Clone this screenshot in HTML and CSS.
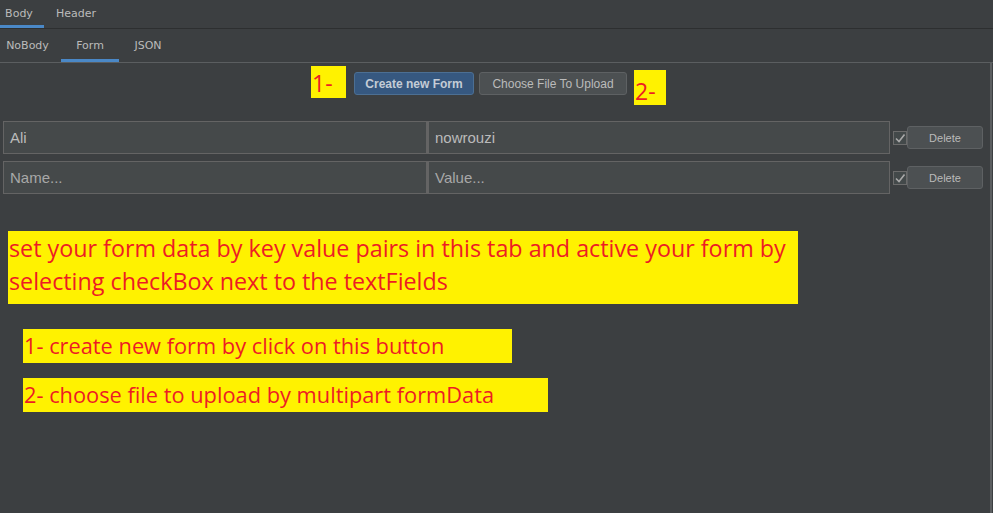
FILE: index.html
```html
<!DOCTYPE html>
<html>
<head>
<meta charset="utf-8">
<link rel="stylesheet" href="styles.css">
</head>
<body>
<div class="app">
  <div class="tabs tabs-main">
    <div class="tab active">Body</div>
    <div class="tab">Header</div>
  </div>
  <div class="tabs tabs-sub">
    <div class="tab">NoBody</div>
    <div class="tab active">Form</div>
    <div class="tab">JSON</div>
  </div>
  <div class="content">
    <div class="actions">
      <span class="note note-num note-1">1-</span>
      <button class="btn btn-primary">Create new Form</button>
      <button class="btn btn-upload">Choose File To Upload</button>
      <span class="note note-num note-2">2-</span>
    </div>
    <div class="rows">
      <div class="row">
        <div class="field field-key">Ali</div>
        <div class="field field-value">nowrouzi</div>
        <span class="check"><svg width="12" height="12" viewBox="0 0 12 12"><path d="M2 6.5 L5 9.5 L10.5 2.5" fill="none" stroke="#a9a9a9" stroke-width="1.6"/></svg></span>
        <button class="btn btn-small">Delete</button>
      </div>
      <div class="row">
        <div class="field field-key placeholder">Name...</div>
        <div class="field field-value placeholder">Value...</div>
        <span class="check"><svg width="12" height="12" viewBox="0 0 12 12"><path d="M2 6.5 L5 9.5 L10.5 2.5" fill="none" stroke="#a9a9a9" stroke-width="1.6"/></svg></span>
        <button class="btn btn-small">Delete</button>
      </div>
    </div>
    <div class="note note-main">set your form data by key value pairs in this tab and active your form by selecting checkBox next to the textFields</div>
    <div class="note note-line note-a">1- create new form by click on this button</div>
    <div class="note note-line note-b">2- choose file to upload by multipart formData</div>
  </div>
</div>
</body>
</html>
```
FILE: styles.css
```css
html, body {
  margin: 0;
  padding: 0;
  background: #3c3f41;
  height: 100%;
}
.app {
  font-family: "DejaVu Sans", sans-serif;
  font-size: 11px;
  color: #bbbbbb;
  height: 513px;
  display: flex;
  flex-direction: column;
  overflow: hidden;
}
.tabs {
  display: flex;
  align-items: stretch;
}
.tabs-main {
  height: 28px;
  border-bottom: 1px solid #2d2f30;
}
.tabs-sub {
  height: 33px;
  border-bottom: 1px solid #5b5e60;
}
.tab {
  display: flex;
  align-items: center;
  justify-content: center;
  box-sizing: border-box;
  border-bottom: 3px solid transparent;
  padding-top: 2px;
}
.tabs-main .tab:nth-child(1) { width: 44px; padding-right: 6px; }
.tabs-main .tab:nth-child(2) { width: 64px; }
.tabs-sub .tab:nth-child(1) { width: 61px; padding-right: 6px; }
.tabs-sub .tab:nth-child(2) { width: 58px; }
.tabs-sub .tab:nth-child(3) { width: 58px; }
.tab.active {
  border-bottom-color: #4a88c7;
}
.content {
  flex: 1;
  border-right: 2px solid #5b5e60;
  margin-right: 1px;
}
.actions {
  display: flex;
  justify-content: center;
  align-items: flex-start;
  padding: 3px 13px 0 0;
  height: 50px;
  box-sizing: border-box;
}
.note {
  background: #fff200;
  color: #ed1c24;
  font-family: "Open Sans", "Lato", sans-serif;
}
.note-num {
  font-size: 23px;
  line-height: 32px;
  white-space: nowrap;
}
.note-1 {
  width: 35px;
  height: 32px;
  box-sizing: border-box;
  margin-right: 8px;
  padding: 1px 0 0 1px;
}
.note-2 {
  width: 32px;
  height: 35px;
  box-sizing: border-box;
  margin-top: 4px;
  margin-left: 7px;
  padding: 5px 0 0 1px;
}
.btn {
  font-family: "Liberation Sans", sans-serif;
  font-size: 12px;
  color: #bbbbbb;
  background: #4c5052;
  border: 1px solid #5e6163;
  border-radius: 3px;
  height: 23px;
  padding: 0;
  margin-top: 6px;
  margin-left: 5px;
  white-space: nowrap;
}
.btn-primary {
  margin-left: 0;
  width: 120px;
  background: #365880;
  border-color: #4c6f93;
  font-weight: bold;
  color: #c4ccd6;
}
.btn-upload {
  width: 148px;
}
.rows {
  display: flex;
  flex-direction: column;
  gap: 7px;
  padding: 8px 0 0 3px;
}
.row {
  display: flex;
  align-items: center;
}
.field {
  box-sizing: border-box;
  height: 33px;
  background: #45494a;
  border: 1px solid #646464;
  font-family: "Liberation Sans", sans-serif;
  font-size: 15px;
  color: #bbbbbb;
  display: flex;
  align-items: center;
  padding-left: 6px;
}
.field-key { width: 424px; }
.field-value { width: 463px; border-left-width: 2px; }
.placeholder { color: #a8a8a8; }
.check {
  box-sizing: border-box;
  width: 14px;
  height: 14px;
  border: 1px solid #6b6b6b;
  background: #43494a;
  margin: 0 0 0 3px;
  display: flex;
  align-items: center;
  justify-content: center;
}
.btn-small {
  width: 76px;
  margin: 0;
  font-size: 11px;
}
.note-main {
  margin: 37px 0 0 8px;
  width: 790px;
  height: 73px;
  box-sizing: border-box;
  font-size: 23.3px;
  line-height: 33px;
  padding: 1px 0 0 1px;
}
.note-line {
  margin-left: 23px;
  height: 34px;
  box-sizing: border-box;
  font-size: 21.8px;
  line-height: 34px;
  padding-left: 1px;
}
.note-a { margin-top: 25px; width: 489px; }
.note-b { margin-top: 15px; width: 525px; }
```
